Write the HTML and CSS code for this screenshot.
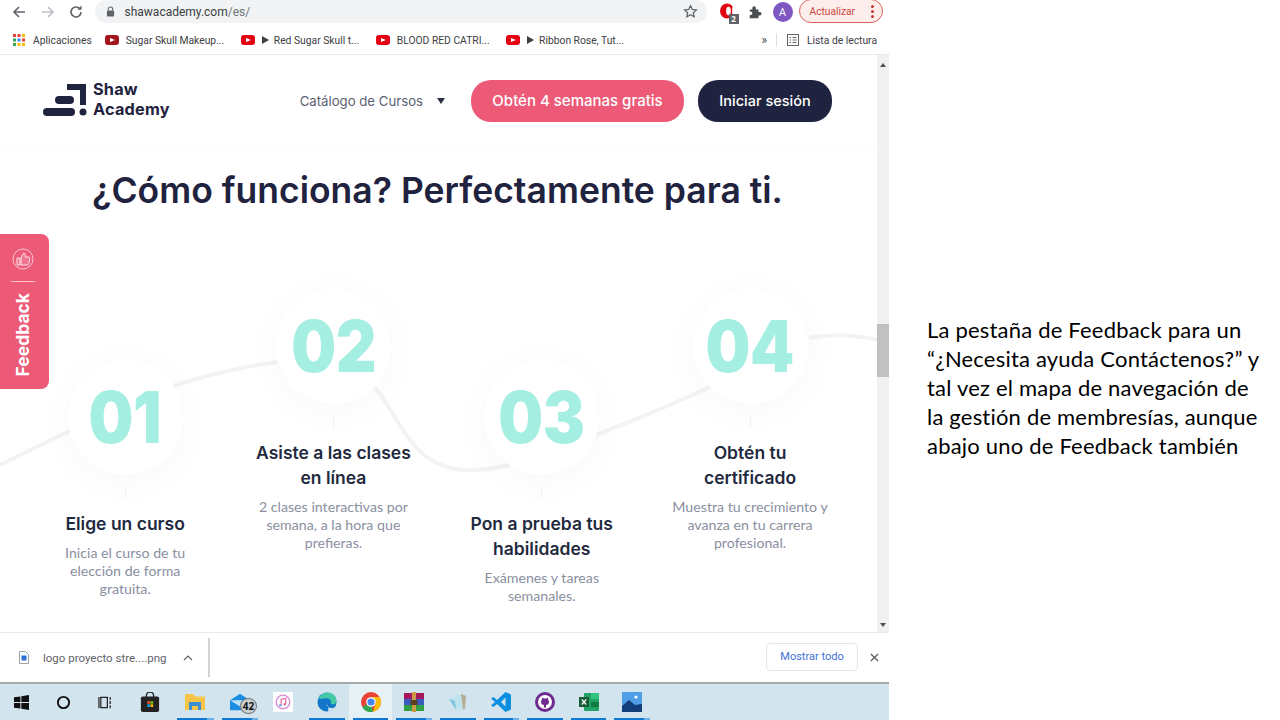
FILE: index.html
```html
<!DOCTYPE html>
<html lang="es">
<head>
    <meta charset="UTF-8">
    <title>Shaw Academy</title>
    <link rel="stylesheet" href="styles.css">
</head>
<body>

<div class="browser">
    <!-- barra de herramientas -->
    <div class="toolbar">
        <svg class="tool-icon" viewBox="0 0 16 16"><path d="M14 8H3M8 3L3 8l5 5" fill="none" stroke="#5f6368" stroke-width="1.6"/></svg>
        <svg class="tool-icon" viewBox="0 0 16 16"><path d="M2 8h11M8 3l5 5-5 5" fill="none" stroke="#bcbfc3" stroke-width="1.6"/></svg>
        <svg class="tool-icon" viewBox="0 0 16 16"><path d="M13 8a5 5 0 1 1-1.5-3.6" fill="none" stroke="#5f6368" stroke-width="1.6"/><path d="M13.5 1.500v4.200H9.300z" fill="#5f6368"/></svg>
        <div class="omnibox">
            <svg class="lock" viewBox="0 0 10 12"><path d="M2.500 5V3.500a2.500 2.500 0 0 1 5 0V5" fill="none" stroke="#5f6368" stroke-width="1.200"/><rect x="1" y="5" width="8" height="6.500" rx="1" fill="#5f6368"/></svg>
            <span class="url">shawacademy.com<span class="url-path">/es/</span></span>
            <svg class="star" viewBox="0 0 16 16"><path d="M8 1.800l1.900 4 4.400.5-3.300 3 .9 4.400L8 11.500l-3.900 2.200.9-4.400-3.300-3 4.400-.5z" fill="none" stroke="#5f6368" stroke-width="1.300"/></svg>
        </div>
        <div class="ext-opera">
            <svg viewBox="0 0 16 16"><ellipse cx="7.500" cy="8" rx="7.500" ry="8" fill="#e0060f"/><ellipse cx="9" cy="8" rx="2.500" ry="4.500" fill="#ffffff"/><path d="M13 4h3v8h-3z" fill="#ffffff"/></svg>
            <span class="ext-badge">2</span>
        </div>
        <svg class="ext-puzzle" viewBox="0 0 16 16"><path d="M2 5h3V3.500a2 2 0 0 1 4 0V5h3v3h1.500a2 2 0 0 1 0 4H12v3H2v-3.500h1a2 2 0 0 0 0-4H2z" fill="#4a4d50"/></svg>
        <span class="avatar">A</span>
        <div class="update-btn">
            <span>Actualizar</span>
            <span class="dots"><i></i><i></i><i></i></span>
        </div>
    </div>

    <!-- marcadores -->
    <div class="bookmarks">
        <span class="bm bm-apps">
            <svg class="apps" viewBox="0 0 12 12">
                <rect x="0" y="0" width="3" height="3" fill="#ea4335"/><rect x="4.500" y="0" width="3" height="3" fill="#ea4335"/><rect x="9" y="0" width="3" height="3" fill="#fbbc05"/>
                <rect x="0" y="4.500" width="3" height="3" fill="#34a853"/><rect x="4.500" y="4.500" width="3" height="3" fill="#4285f4"/><rect x="9" y="4.500" width="3" height="3" fill="#ea4335"/>
                <rect x="0" y="9" width="3" height="3" fill="#34a853"/><rect x="4.500" y="9" width="3" height="3" fill="#fbbc05"/><rect x="9" y="9" width="3" height="3" fill="#fbbc05"/>
            </svg>
            Aplicaciones
        </span>
        <span class="bm"><span class="yt yt-dark"></span>Sugar Skull Makeup...</span>
        <span class="bm"><span class="yt"></span><span class="play"></span>Red Sugar Skull t...</span>
        <span class="bm"><span class="yt"></span>BLOOD RED CATRI...</span>
        <span class="bm"><span class="yt"></span><span class="play"></span>Ribbon Rose, Tut...</span>
        <span class="bm-right">
            <span class="more">»</span>
            <span class="bm-sep"></span>
            <svg class="reading" viewBox="0 0 12 12"><rect x=".5" y=".5" width="11" height="11" fill="none" stroke="#5f6368"/><path d="M2.500 3.500h1.500M5.500 3.500h4M2.500 6h1.500M5.500 6h4M2.500 8.500h1.500M5.500 8.500h4" stroke="#5f6368"/></svg>
            Lista de lectura
        </span>
    </div>

    <!-- pagina -->
    <div class="viewport">
        <div class="page">
            <svg class="curve" viewBox="0 0 877 577">
                <path d="M0 410C30 395 50 385 68 377C110 355 180 320 277 307M375 333C400 360 410 415 469 415C490 415 500 412 509 410C560 395 650 360 710 332M809 283C830 279 855 280 877 285" fill="none" stroke="#f3f3f3" stroke-width="4"/>
            </svg>

            <header class="site-header">
                <div class="logo">
                    <svg class="logo-mark" viewBox="0 0 44 33">
                        <path d="M24 0h19v21h-6V6H24z" fill="#1f2340"/>
                        <rect x="12" y="12" width="19" height="8" rx="4" fill="#1f2340"/>
                        <rect x="0" y="24" width="32" height="8" rx="4" fill="#1f2340"/>
                        <circle cx="40" cy="28" r="3.500" fill="#1f2340"/>
                    </svg>
                    <span class="logo-text">Shaw<br>Academy</span>
                </div>
                <nav class="site-nav">
                    <a class="catalog" href="#">Catálogo de Cursos</a>
                    <span class="caret"></span>
                    <a class="btn btn-pink" href="#">Obtén 4 semanas gratis</a>
                    <a class="btn btn-dark" href="#">Iniciar sesión</a>
                </nav>
            </header>

            <h2 class="title">¿Cómo funciona? Perfectamente para ti.</h2>

            <div class="steps">
                <div class="step step-low">
                    <div class="circle"><span class="num">01</span></div>
                    <span class="stem"></span>
                    <h3>Elige un curso</h3>
                    <p>Inicia el curso de tu elección de forma gratuita.</p>
                </div>
                <div class="step">
                    <div class="circle"><span class="num">02</span></div>
                    <span class="stem"></span>
                    <h3>Asiste a las clases en línea</h3>
                    <p>2 clases interactivas por semana, a la hora que prefieras.</p>
                </div>
                <div class="step step-low">
                    <div class="circle"><span class="num">03</span></div>
                    <span class="stem"></span>
                    <h3>Pon a prueba tus habilidades</h3>
                    <p>Exámenes y tareas semanales.</p>
                </div>
                <div class="step">
                    <div class="circle"><span class="num">04</span></div>
                    <span class="stem"></span>
                    <h3>Obtén tu certificado</h3>
                    <p>Muestra tu crecimiento y avanza en tu carrera profesional.</p>
                </div>
            </div>

            <div class="feedback">
                <svg class="thumb" viewBox="0 0 22 22">
                    <circle cx="11" cy="11" r="10" fill="none" stroke="#f9c6d1" stroke-width="1"/>
                    <path d="M5 10h3v7H5zM9 10l2.500-5c1.500 0 2 1 1.500 4h4c1 0 1 1 .8 2l-1 4.500c-.2 1-.8 1.500-1.800 1.500H9z" fill="#ef7490" stroke="#fde3e8" stroke-width="1"/>
                </svg>
                <span class="feedback-line"></span>
                <span class="feedback-text">Feedback</span>
            </div>
        </div>
        <div class="scrollbar">
            <span class="arrow-up"></span>
            <span class="thumb-bar"></span>
            <span class="arrow-down"></span>
        </div>
    </div>

    <!-- descargas -->
    <div class="downloads">
        <svg class="file-icon" viewBox="0 0 10 13"><path d="M.5.500h6l3 3v9H.500z" fill="#fff" stroke="#9aa0a6"/><rect x="2.500" y="4.500" width="5" height="5" fill="#2b6fd6"/></svg>
        <span class="file-name">logo proyecto stre....png</span>
        <svg class="chevron" viewBox="0 0 10 6"><path d="M1 5l4-4 4 4" fill="none" stroke="#5f6368" stroke-width="1.200"/></svg>
        <span class="dl-sep"></span>
        <a class="show-all" href="#">Mostrar todo</a>
        <svg class="dl-close" viewBox="0 0 10 10"><path d="M1 1l8 8M9 1L1 9" stroke="#5f6368" stroke-width="1.500"/></svg>
    </div>

    <!-- barra de tareas -->
    <div class="taskbar">
        <div class="task task-sys"><svg viewBox="0 0 16 16"><path d="M0 2.500L6.800 1.500v6H0zM7.800 1.300L16 0v7.500H7.800zM0 8.500h6.800v6L0 13.500zM7.800 8.500H16V16l-8.200-1.300z" fill="#111"/></svg></div>
        <div class="task task-sys"><svg viewBox="0 0 16 16"><circle cx="8" cy="8" r="6" fill="none" stroke="#111" stroke-width="2"/></svg></div>
        <div class="task task-sys"><svg viewBox="0 0 16 16"><path d="M3 2.500h7v11H3zM1 2v12M13 2v3M13 6.500v3M13 11v3" fill="none" stroke="#222" stroke-width="1.300"/></svg></div>
        <div class="task"><svg viewBox="0 0 20 22"><path d="M6 6V4a4 4 0 0 1 8 0v2" fill="none" stroke="#222" stroke-width="1.500"/><rect x="0" y="5" width="20" height="17" rx="2" fill="#222"/><rect x="7" y="10" width="3" height="3" fill="#f25022"/><rect x="10.500" y="10" width="3" height="3" fill="#7fba00"/><rect x="7" y="13.500" width="3" height="3" fill="#00a4ef"/><rect x="10.500" y="13.500" width="3" height="3" fill="#ffb900"/></svg></div>
        <div class="task task-on task-stack"><svg viewBox="0 0 20 18"><path d="M0 1h8l2 2.500h10V17H0z" fill="#f7c548"/><path d="M4 9h12v8h-3v-4H7v4H4z" fill="#3b8fd6"/></svg></div>
        <div class="task task-on task-stack">
            <svg viewBox="0 0 22 18"><path d="M0 7L11 0l11 7v11H0z" fill="#1b8ee0"/><path d="M0 7l11 7 11-7" fill="#bde0f7"/></svg>
            <span class="mail-badge">42</span>
        </div>
        <div class="task"><svg viewBox="0 0 22 22"><rect width="22" height="22" fill="#fff"/><circle cx="11" cy="11" r="7.500" fill="none" stroke="#d98bd6" stroke-width="1.500"/><path d="M9 14.500V8l5-1v6" fill="none" stroke="#e8609a" stroke-width="1.300"/><circle cx="8" cy="14.500" r="1.300" fill="#6d9be8"/><circle cx="13" cy="13.500" r="1.300" fill="#e8609a"/></svg></div>
        <div class="task task-on"><svg viewBox="0 0 22 22"><circle cx="11" cy="11" r="10.500" fill="#1277c9"/><path d="M2 7C4 2.500 8 .5 12 .5c5.500 0 9.500 4 9.500 9 0 3-2.500 4.500-5 4-1.200-.2-1.700-.7-1.300-1.300 .8-2-.8-5.200-4.700-5.200C7 7 4 8.500 2 7z" fill="#46c9a6"/><path d="M10.500 13c0 3 3 5.500 7 4.500l2.500-1.500c-1.500 3.500-5 6-8.500 5.500 2-1 1-5.500-1-8.500z" fill="#d2e4ee"/></svg></div>
        <div class="task task-on task-active"><svg viewBox="0 0 20 20"><circle cx="10" cy="10" r="10" fill="#ea4335"/><path d="M10 10L1.300 15A10 10 0 0 0 12 19.800z" fill="#34a853"/><path d="M10 5h8.700a10 10 0 0 1-6.700 14.800L15 10z" fill="#fbbc05"/><circle cx="10" cy="10" r="4.800" fill="#fff"/><circle cx="10" cy="10" r="3.600" fill="#4285f4"/></svg></div>
        <div class="task task-on task-stack"><svg viewBox="0 0 20 20"><rect width="20" height="6" y="1" fill="#a3195b"/><rect width="20" height="6" y="7" fill="#3b5bc0"/><rect width="20" height="6" y="13" fill="#2f9e44"/><rect x="8" width="4" height="20" fill="#c99a4a"/><rect x="6.500" y="8" width="7" height="5" fill="#5a4020"/></svg></div>
        <div class="task task-on"><svg viewBox="0 0 20 20"><path d="M1 7l12-5 5 2-1 13-9 1z" fill="#bfe3ee"/><path d="M13 2l5 2-1 13-2 .3z" fill="#b5ad94"/><path d="M1 7l6 2 1 9z" fill="#7fc4de"/></svg></div>
        <div class="task task-on task-stack"><svg viewBox="0 0 20 20"><path d="M14.500 0L20 2.500v15L14.500 20 6 12l-3.500 3L0 13.500 4 10 0 6.500 2.500 5 6 8zM14.500 5.500L10 10l4.500 4.500z" fill="#0e8ee0"/></svg></div>
        <div class="task task-on"><svg viewBox="0 0 20 20"><circle cx="10" cy="10" r="8.500" fill="#fff" stroke="#6e2b8f" stroke-width="3"/><path d="M6 10c0-1 .3-2 1-2.500L7 5.500l2 1a6 6 0 0 1 2 0l2-1 0 2c.7.500 1 1.500 1 2.500 0 2-1.500 3-3 3v2.500H9V13c-1.500 0-3-1-3-3z" fill="#6e2b8f"/></svg></div>
        <div class="task task-on"><svg viewBox="0 0 20 20"><rect x="5" y="1" width="15" height="18" rx="1" fill="#21a366"/><rect x="12" y="1" width="8" height="6" fill="#33c481"/><rect x="12" y="10" width="8" height="5" fill="#107c41"/><rect x="0" y="5" width="10" height="10" fill="#185c37"/><path d="M2.800 7.500l4.400 5M7.200 7.500l-4.400 5" stroke="#fff" stroke-width="1.200"/></svg></div>
        <div class="task task-on task-stack"><svg viewBox="0 0 20 20"><rect width="20" height="20" fill="#4f9fe8"/><path d="M0 20V14l7-6 6 5 7-1v8z" fill="#123f7a"/><circle cx="14" cy="5" r="1.600" fill="#fff"/></svg></div>
    </div>
</div>

<aside class="note">
    La pestaña de Feedback para un “¿Necesita ayuda Contáctenos?” y tal vez el mapa de navegación de la gestión de membresías, aunque abajo uno de Feedback también
</aside>

</body>
</html>
```

FILE: styles.css
```css
/* Generales */
html, body {
    margin: 0;
    padding: 0;
    height: 100%;
    background-color: #ffffff;
    overflow: hidden;
}

body {
    display: flex;
    font-family: 'Open Sans', sans-serif;
}

.browser {
    width: 889px;
    height: 720px;
    display: flex;
    flex-direction: column;
    flex-shrink: 0;
}

/* Barra de herramientas */
.toolbar {
    height: 28px;
    display: flex;
    align-items: flex-start;
    padding-left: 11px;
    box-sizing: border-box;
}

.tool-icon {
    width: 16px;
    height: 16px;
    margin-top: 4px;
    margin-right: 12.5px;
    flex-shrink: 0;
}

.omnibox {
    width: 612px;
    height: 23px;
    margin-left: -2px;
    background-color: #f1f3f4;
    border-radius: 12px;
    display: flex;
    align-items: center;
    padding: 0 9px 0 11px;
    box-sizing: border-box;
    flex-shrink: 0;
}

.lock {
    width: 9px;
    height: 11px;
}

.url {
    margin-left: 10px;
    font-family: 'Roboto', sans-serif;
    font-size: 12px;
    color: #3c4043;
}

.url-path {
    color: #70757a;
}

.star {
    width: 15px;
    height: 15px;
    margin-left: auto;
}

.ext-opera {
    position: relative;
    width: 15px;
    height: 16px;
    margin: 3px 0 0 13px;
}

.ext-opera svg {
    width: 15px;
    height: 16px;
    display: block;
}

.ext-badge {
    position: absolute;
    right: -4px;
    bottom: -5px;
    width: 10px;
    height: 10px;
    background-color: #5f6368;
    color: #ffffff;
    font-size: 8px;
    font-weight: 700;
    line-height: 10px;
    text-align: center;
}

.ext-puzzle {
    width: 14px;
    height: 14px;
    margin: 5px 0 0 13px;
}

.avatar {
    width: 20px;
    height: 20px;
    margin: 2px 0 0 11px;
    border-radius: 50%;
    background-color: #7e57c2;
    color: #ffffff;
    font-size: 11px;
    line-height: 20px;
    text-align: center;
}

.update-btn {
    width: 84px;
    height: 24px;
    margin-left: 6px;
    margin-top: -1px;
    border: 1px solid #d9635a;
    border-radius: 12px;
    background-color: #fdeeec;
    box-sizing: border-box;
    display: flex;
    align-items: center;
    justify-content: space-between;
    padding: 0 8px 0 10px;
    color: #c8453b;
    font-family: 'Roboto', sans-serif;
    font-size: 10.2px;
}

.dots {
    display: flex;
    flex-direction: column;
    gap: 2px;
}

.dots i {
    display: block;
    width: 3px;
    height: 3px;
    border-radius: 50%;
    background-color: #c5392f;
}

/* Marcadores */
.bookmarks {
    height: 27px;
    display: flex;
    align-items: center;
    padding: 0 12px 2px 13px;
    box-sizing: border-box;
    border-bottom: 1px solid #e8eaed;
    font-family: 'Roboto', sans-serif;
    font-size: 10.3px;
    color: #3c4043;
}

.bm {
    display: flex;
    align-items: center;
    margin-right: 16.5px;
    white-space: nowrap;
}

.apps {
    width: 12px;
    height: 12px;
    margin-right: 8px;
}

.bm-apps {
    margin-right: 13px;
}

.yt {
    position: relative;
    width: 14px;
    height: 10px;
    margin-right: 7px;
    border-radius: 3px;
    background-color: #e60012;
}

.yt::after {
    content: "";
    position: absolute;
    left: 5px;
    top: 2.5px;
    border-left: 5px solid #ffffff;
    border-top: 2.5px solid transparent;
    border-bottom: 2.5px solid transparent;
}

.yt-dark {
    background-color: #a5151c;
}

.play {
    margin-right: 5px;
    border-left: 7px solid #3c4043;
    border-top: 4px solid transparent;
    border-bottom: 4px solid transparent;
}

.bm-right {
    margin-left: auto;
    display: flex;
    align-items: center;
    white-space: nowrap;
}

.more {
    font-size: 12px;
    margin-right: 9px;
}

.bm-sep {
    width: 1px;
    height: 14px;
    background-color: #dadce0;
    margin-right: 10px;
}

.reading {
    width: 12px;
    height: 12px;
    margin-right: 8px;
}

/* Pagina */
.viewport {
    height: 577px;
    display: flex;
    flex-shrink: 0;
}

.page {
    position: relative;
    width: 877px;
    height: 577px;
    overflow: hidden;
}

.curve {
    position: absolute;
    left: 0;
    top: 0;
    width: 877px;
    height: 577px;
}

.site-header {
    position: relative;
    height: 90px;
    display: flex;
    align-items: center;
    justify-content: space-between;
    padding: 0 45px 0 43px;
    box-shadow: 0 6px 10px rgba(0, 0, 0, 0.012);
    background-color: #ffffff;
}

.logo {
    display: flex;
    align-items: center;
}

.logo-mark {
    width: 44px;
    height: 33px;
    margin-right: 6px;
}

.logo-text {
    margin-top: -2px;
    font-family: 'Inter', sans-serif;
    font-weight: 700;
    font-size: 16.3px;
    line-height: 20px;
    letter-spacing: 0.2px;
    color: #1f2340;
}

.site-nav {
    display: flex;
    align-items: center;
    margin-top: 2px;
}

.catalog {
    font-family: 'Inter', sans-serif;
    font-size: 13.2px;
    color: #5a5f72;
    text-decoration: none;
}

.caret {
    margin: 0 26px 0 14px;
    border-top: 6px solid #2c3044;
    border-left: 4.5px solid transparent;
    border-right: 4.5px solid transparent;
}

.btn {
    height: 42px;
    line-height: 42px;
    border-radius: 20px;
    font-family: 'Inter', sans-serif;
    font-size: 14.5px;
    font-weight: 500;
    color: #ffffff;
    text-align: center;
    text-decoration: none;
}

.btn-pink {
    width: 213px;
    font-size: 15px;
    background-color: #ec5a78;
    margin-right: 14px;
}

.btn-dark {
    width: 134px;
    background-color: #1f2340;
}

.title {
    position: relative;
    margin: 25px 0 0 0;
    padding-right: 2px;
    font-family: 'Inter', sans-serif;
    font-size: 35.5px;
    line-height: 42px;
    font-weight: 600;
    color: #1f2340;
    text-align: center;
}

/* Pasos */
.steps {
    position: relative;
    display: grid;
    grid-template-columns: repeat(4, 208.3px);
    align-items: start;
    padding-left: 21px;
    margin-top: 77px;
}

.step {
    display: flex;
    flex-direction: column;
    align-items: center;
    text-align: center;
}

.step-low {
    margin-top: 71px;
}

.circle {
    width: 115px;
    height: 115px;
    border-radius: 50%;
    background-color: #ffffff;
    box-shadow: 0 6px 40px rgba(0, 0, 0, 0.03);
    font-family: 'Inter', sans-serif;
    font-weight: 900;
    font-size: 71px;
    line-height: 115px;
    color: #a5eee2;
}

.num {
    display: inline-block;
    letter-spacing: -0.5px;
    transform: scaleX(0.89);
}

.stem {
    width: 1px;
    height: 12px;
    margin-top: 12px;
    background-color: #e6f3f8;
}

.step h3 {
    width: 165px;
    margin: 12px 0 0 0;
    font-family: 'Inter', sans-serif;
    font-size: 17.5px;
    line-height: 25px;
    font-weight: 600;
    color: #1f2a40;
}

.step p {
    width: 160px;
    margin: 8px 0 0 0;
    font-family: 'Lato', sans-serif;
    font-size: 14.2px;
    line-height: 18px;
    color: #8a8f9f;
}

/* Pestana de feedback */
.feedback {
    position: absolute;
    left: 0;
    top: 179px;
    width: 49px;
    height: 155px;
    border-radius: 0 8px 8px 0;
    background-color: #ec5a78;
    display: flex;
    flex-direction: column;
    align-items: center;
    padding-right: 4px;
    box-sizing: border-box;
}

.thumb {
    width: 22px;
    height: 22px;
    margin-top: 14px;
}

.feedback-line {
    width: 24px;
    height: 1px;
    margin-top: 11px;
    background-color: #f9c6d1;
}

.feedback-text {
    margin-top: 11px;
    writing-mode: vertical-rl;
    transform: rotate(180deg);
    font-family: 'Inter', sans-serif;
    font-weight: 700;
    font-size: 17.5px;
    line-height: 20px;
    color: #ffffff;
}

/* Scroll */
.scrollbar {
    position: relative;
    width: 12px;
    height: 577px;
    background-color: #f1f1f1;
}

.thumb-bar {
    position: absolute;
    left: 0;
    top: 269px;
    width: 12px;
    height: 53px;
    background-color: #c1c1c1;
}

.arrow-up {
    position: absolute;
    left: 3px;
    top: 8px;
    border-bottom: 4px solid #505050;
    border-left: 3px solid transparent;
    border-right: 3px solid transparent;
}

.arrow-down {
    position: absolute;
    left: 3px;
    bottom: 5px;
    border-top: 4px solid #505050;
    border-left: 3px solid transparent;
    border-right: 3px solid transparent;
}

/* Descargas */
.downloads {
    height: 50px;
    display: flex;
    align-items: center;
    padding-left: 19px;
    box-sizing: border-box;
    border-top: 1px solid #e8eaed;
    font-family: 'Roboto', sans-serif;
    font-size: 11.5px;
    color: #5f6368;
}

.file-icon {
    width: 10px;
    height: 13px;
    margin-right: 14px;
}

.file-name {
    width: 123px;
    white-space: nowrap;
}

.chevron {
    width: 10px;
    height: 6px;
    margin-left: 17px;
}

.dl-sep {
    width: 2px;
    height: 39px;
    margin-left: 15px;
    background-color: #d4d4d4;
}

.show-all {
    width: 92px;
    height: 28px;
    line-height: 26px;
    margin-left: auto;
    margin-top: -2px;
    box-sizing: border-box;
    border: 1px solid #e4e6e9;
    border-radius: 4px;
    color: #3f6fd9;
    font-size: 11px;
    text-align: center;
    text-decoration: none;
}

.dl-close {
    width: 9px;
    height: 9px;
    margin: 0 10px 0 12px;
}

/* Barra de tareas */
.taskbar {
    height: 38px;
    display: flex;
    background-color: #d2e4ee;
    border-top: 2px solid #a3a9ac;
    box-sizing: border-box;
}

.task {
    position: relative;
    width: 43.6px;
    height: 36px;
    display: flex;
    align-items: center;
    justify-content: center;
    box-sizing: border-box;
    flex-shrink: 0;
}

.task svg {
    width: 20px;
    height: 20px;
}

.task-sys svg {
    width: 15px;
    height: 15px;
}

.task:nth-child(-n+2) {
    width: 42px;
}

.task:nth-child(4) {
    width: 45px;
}

.task:nth-child(5) {
    width: 45.4px;
}

.task-on::after {
    content: "";
    position: absolute;
    left: 4px;
    right: 4px;
    bottom: 0;
    height: 2px;
    background-color: #0f78d4;
}

.task-stack::after {
    background: linear-gradient(to right, #0f78d4 82%, #6cb0e8 82%);
}

.task-active {
    background-color: #e6f1f6;
}

.mail-badge {
    position: absolute;
    left: 22px;
    top: 14px;
    width: 17px;
    height: 16px;
    border-radius: 50%;
    background-color: #c9d0d4;
    border: 1px solid #777777;
    box-sizing: border-box;
    color: #111111;
    font-size: 10px;
    font-weight: 700;
    line-height: 14px;
    text-align: center;
}

/* Nota lateral */
.note {
    width: 336px;
    margin: 315px 0 0 38px;
    font-family: 'Lato', sans-serif;
    font-size: 22px;
    line-height: 29px;
    letter-spacing: 0.2px;
    color: #000000;
}
```
